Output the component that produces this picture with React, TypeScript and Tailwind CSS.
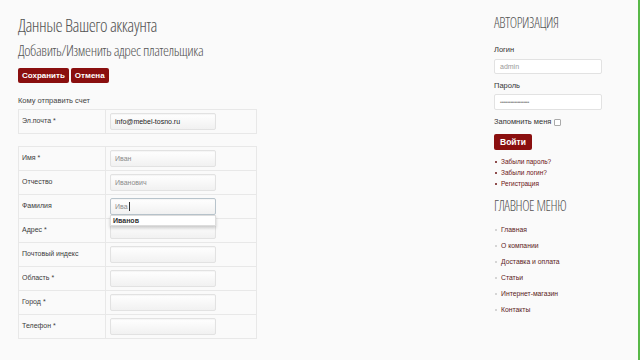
const labelFont = { fontFamily: '"Liberation Sans", Arial, sans-serif' };
const headFont = { fontFamily: '"Open Sans", sans-serif' };

const rows: { label: string; value?: string; focused?: boolean }[] = [
  { label: "Имя *", value: "Иван" },
  { label: "Отчество", value: "Иванович" },
  { label: "Фамилия", value: "Ива", focused: true },
  { label: "Адрес *" },
  { label: "Почтовый индекс" },
  { label: "Область *" },
  { label: "Город *" },
  { label: "Телефон *" },
];

const menu = ["Главная", "О компании", "Доставка и оплата", "Статьи", "Интернет-магазин", "Контакты"];

function Field({ value, dark, focused }: { value?: string; dark?: boolean; focused?: boolean }) {
  return (
    <div
      className={
        "relative h-[17px] w-[106px] rounded-[2px] border bg-gradient-to-b from-white to-[#f1f1f1] px-[4px] text-[7px] leading-[15px] shadow-[inset_0_1px_1px_rgba(0,0,0,0.04)] " +
        (focused ? "border-[#b8c4cc]" : "border-[#e2e2e2]") +
        " " +
        (dark ? "text-[#222]" : "text-[#8a8a8a]")
      }
    >
      {value}
      {focused ? <span className="ml-[1px] inline-block h-[9px] w-px translate-y-[2px] bg-[#333]" /> : null}
      {focused ? (
        <div className="absolute left-[-1px] top-[16px] z-10 h-[11px] w-[106px] border border-[#ddd] bg-white px-[2px] text-[7px] font-bold leading-[9px] text-[#333] shadow-[0_2px_3px_rgba(0,0,0,0.2)]">
          Иванов
        </div>
      ) : null}
    </div>
  );
}

function Row({ label, h, children }: { label: string; h: string; children: React.ReactNode }) {
  return (
    <div className={"flex border-b border-[#e8e8e8] last:h-[23px] last:border-b-0 " + h}>
      <div className="flex w-[87px] items-center border-r border-[#e8e8e8] pl-[3px] text-[7px] text-[#3a3a3a]">{label}</div>
      <div className="flex items-center pl-[4px]">{children}</div>
    </div>
  );
}

export default function App() {
  return (
    <div className="flex h-[360px] w-[640px] overflow-hidden border-r-2 border-[#58b848] bg-[#fafafa]" style={labelFont}>
      <div className="w-[494px] shrink-0 pl-[18px] pt-[14px]">
        <h1 className="h-[22px] text-[18px] font-light font-stretch-condensed leading-[22px] tracking-[-0.5px] text-[#555]" style={headFont}>
          Данные Вашего аккаунта
        </h1>
        <h2 className="mt-[4px] h-[20px] text-[15px] font-light font-stretch-condensed leading-[20px] tracking-[-0.4px] text-[#555]" style={headFont}>
          Добавить/Изменить адрес плательщика
        </h2>
        <div className="mt-[8px] flex gap-[2px]">
          <button className="h-[15px] rounded-[2px] bg-[#8a0f0f] px-[4px] text-[8px] font-bold text-white">Сохранить</button>
          <button className="h-[15px] rounded-[2px] bg-[#8a0f0f] px-[4px] text-[8px] font-bold text-white">Отмена</button>
        </div>
        <p className="mt-[12px] text-[7.5px] leading-[12px] text-[#444]">Кому отправить счет</p>
        <div className="mt-[2px] w-[239px] border border-[#e8e8e8] bg-[#fafafa]">
          <Row label="Эл.почта *" h="h-[22px]">
            <Field value="info@mebel-tosno.ru" dark />
          </Row>
        </div>
        <div className="mt-[12px] w-[239px] border border-[#e8e8e8] bg-[#fafafa]">
          {rows.map((r) => (
            <Row key={r.label} label={r.label} h="h-[24px]">
              <Field value={r.value} focused={r.focused} />
            </Row>
          ))}
        </div>
      </div>
      <div className="pt-[14px]">
        <h3 className="h-[18px] text-[14px] font-light font-stretch-condensed leading-[18px] tracking-[-0.4px] text-[#555]" style={headFont}>
          АВТОРИЗАЦИЯ
        </h3>
        <p className="mt-[12px] text-[7.5px] leading-[12px] text-[#333]">Логин</p>
        <div className="mt-[3px] h-[15px] w-[108px] rounded-[2px] border border-[#e2e2e2] bg-white px-[5px] text-[7px] leading-[13px] text-[#999]">
          admin
        </div>
        <p className="mt-[6px] text-[7.5px] leading-[12px] text-[#333]">Пароль</p>
        <div className="mt-[2px] h-[16px] w-[108px] rounded-[2px] border border-[#e2e2e2] bg-white px-[5px] text-[5px] leading-[14px] tracking-[-0.3px] text-[#888]">
          ••••••••••••••••••••
        </div>
        <div className="mt-[6px] flex h-[12px] items-center text-[7.5px] text-[#333]">
          Запомнить меня
          <span className="ml-[3px] inline-block h-[7px] w-[7px] rounded-[1px] border border-[#aaa] bg-white" />
        </div>
        <button className="mt-[5px] h-[16px] rounded-[2px] bg-[#8a0f0f] px-[6px] text-[8.5px] font-bold text-white">Войти</button>
        <ul className="mt-[4px] text-[6.5px] leading-[11px] text-[#6a1212]">
          {["Забыли пароль?", "Забыли логин?", "Регистрация"].map((t) => (
            <li key={t} className="flex items-center">
              <span className="mr-[4px] ml-[1px] inline-block h-[2px] w-[2px] rounded-full bg-[#6a1212]" />
              {t}
            </li>
          ))}
        </ul>
        <h3 className="mt-[8px] h-[18px] text-[14px] font-light font-stretch-condensed leading-[18px] tracking-[-0.4px] text-[#555]" style={headFont}>
          ГЛАВНОЕ МЕНЮ
        </h3>
        <ul className="mt-[7px] text-[6.8px] leading-[16px] text-[#5a2222]">
          {menu.map((t) => (
            <li key={t} className="flex items-center">
              <span className="mr-[4px] ml-[1px] inline-block h-[2px] w-[2px] rounded-full bg-[#c8c8c8]" />
              {t}
            </li>
          ))}
        </ul>
      </div>
    </div>
  );
}
